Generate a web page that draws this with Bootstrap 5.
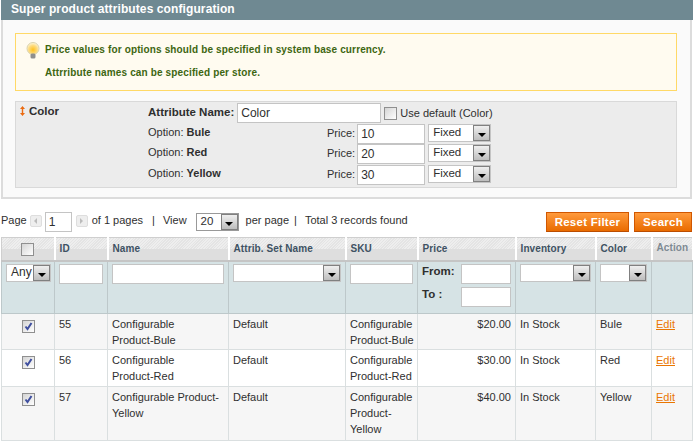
<!DOCTYPE html>
<html lang="en">
<head>
<meta charset="UTF-8">
<title>Super product attributes configuration</title>
<link rel="stylesheet" href="https://cdn.jsdelivr.net/npm/bootstrap@5.3.0/dist/css/bootstrap.min.css">
<style>
body { font-family: "Liberation Sans", Arial, sans-serif; font-size: 11px; color: #2f2f2f; background: #fff; margin: 0; width: 693px; height: 442px; overflow: hidden; line-height: 16px; }
.sec-head { height: 20px; margin-left: 1px; background: #6f8992; color: #fff; font-weight: 700; font-size: 12px; line-height: 18px; padding-left: 10px; letter-spacing: .1px; }
.sec-body { height: 179px; width: 691px; margin-left: 1px; background: #fafafa; border: 2px solid #dcdcdc; border-top: 0; padding: 13px 13px 0 12px; }
.note-box { height: 58px; background: #fffbf0; border: 1px solid #ffd967; color: #3d6611; font-weight: 700; font-size: 10px; padding: 8px 0 0 9px; margin-bottom: 10px; }
.note-box p { margin: 0 0 7px 20px; line-height: 16px; letter-spacing: .14px; }
.note-icon { float: left; margin: 0; }
.attr-box { height: 87px; background: #ececec; border: 1px solid #d9d9d9; padding: 1px 0 0 4px; }
.attr-name { width: 128px; font-weight: 700; font-size: 11.5px; line-height: 16px; }
.drag-icon { margin-right: 4px; vertical-align: -1px; }
.attr-col { width: 179px; padding-bottom: 4px; }
.attr-row { height: 20.5px; }
.attr-label { font-size: 11.5px; margin-right: 3px; padding-bottom: 2px; }
.price-label { padding-bottom: 2px; }
.field { height: 20px; border: 1px solid #c4c4c4; background: #fff; font: 12px "Liberation Sans", Arial, sans-serif; color: #2f2f2f; padding: 0 3px; outline: 0; border-radius: 0; }
.w-name { width: 144px; }
.w-price { width: 68px; margin: 0 3px 0 2px; }
.sel-box { display: flex; height: 18px; border: 1px solid #c4c4c4; background: #fff; line-height: 15px; font-size: 11.5px; padding-left: 4px; justify-content: space-between; }
.sel-arrow { width: 17px; height: 16px; background: linear-gradient(#efefef, #bdbdbd); border: 1px solid #808080; display: flex; align-items: center; justify-content: center; flex: none; }
.sel-arrow::after { content: ""; border: 4px solid transparent; border-top-color: #000; border-bottom: 0; margin-top: 4px; }
.w-fixed { width: 63px; margin-top: -2px; }
.tick { appearance: none; width: 13px; height: 13px; border: 1px solid #8f8f8f; background: linear-gradient(135deg, #d4d4d4, #fff); margin: 0; vertical-align: middle; display: inline-block; }
.tick:checked { background-image: url("data:image/svg+xml,%3Csvg xmlns='http://www.w3.org/2000/svg' viewBox='0 0 11 11'%3E%3Cpath d='M2.5 5.5l2 2.5 4-6' fill='none' stroke='%233f4f9f' stroke-width='2'/%3E%3C/svg%3E"), linear-gradient(135deg, #d4d4d4, #fff); }
.use-tick { margin: 0 3px; }
.pager-bar { height: 39px; padding: 13px 0 0 1px; font-size: 11px; line-height: 17px; }
.pg-btn { width: 12px; height: 12px; background: #eee; border: 1px solid #dedede; margin: 3px 3px 0 3px; display: inline-flex; align-items: center; justify-content: center; border-radius: 2px; }
.pg-btn + .field + .pg-btn { margin: 3px 4px 0 2px; }
.pg-prev::after { content: ""; border: 3px solid transparent; border-right-color: #bbb; border-left: 0; }
.pg-next::after { content: ""; border: 3px solid transparent; border-left-color: #bbb; border-right: 0; }
.w-page { width: 27px; height: 20px; margin: 0 2px 0 0; }
.w-view { width: 43px; margin: 1px 7px 0 9px; border-color: #999; }
.sep { margin: 0 8px 0 9px; }
.sep-near { margin-left: 5px; }
.act-btn { height: 20px; background: linear-gradient(#ff9a3c, #e96b00); border: 1px solid #d15700; border-bottom-color: #bb4d00; color: #fff; font-weight: 700; font-size: 11.5px; line-height: 17px; padding: 0; border-radius: 0; letter-spacing: .25px; }
.btn-reset { width: 83px; margin-right: 5px; }
.btn-search { width: 58px; }
.tools { margin-left: auto; margin-top: 0; margin-right: 1px; }
.grid-tbl { table-layout: fixed; width: 691px; margin: -1px 0 0 1px; border-collapse: collapse; font-size: 11px; }
.grid-tbl th, .grid-tbl td { border: 1px solid #dadfe0; padding: 0 3px; vertical-align: top; }
.head-row th { height: 23px; background: repeating-linear-gradient(135deg, #eeeeee 0 1px, #e4e4e4 1px 2px) top / 100% 50% no-repeat, #dedede; border-color: #cfcfcf; border-right: 2px solid #fff; border-bottom: 2px solid #c5c5c5; color: #3e5263; font-size: 10px; padding: 4px 0 0 4px; line-height: 14px; letter-spacing: .1px; }
.head-row th.act-col { color: #7e8a93; padding-top: 3px; }
.head-row th.tick-col { padding: 4px 0 0 0; line-height: 13px; }
.filter-row td { height: 53px; background: #d6e3e5; border-color: #bdc8ca; padding: 2px 4px 0; }
.filter-row .field { width: 100%; display: block; }
.w-any { width: 45px; font-size: 12px; padding-left: 4px; }
.range { height: 23px; font-weight: 700; font-size: 11.5px; line-height: 15px; }
.filter-row .range .field { width: 50px; margin-left: auto; }
.row-alt td { background: #f6f6f6; }
.row-plain td { background: #fff; }
.data-row td { line-height: 16px; padding: 2px 4px 0; white-space: nowrap; }
.data-row td:first-child { text-align: center; padding-top: 3px; }
.data-row a { color: #ea7601; }
.row-h1 td { height: 36px; }
.row-h2 td { height: 37px; }
.row-h3 td { height: 54px; }
</style>
</head>
<body>
<div class="sec-head">Super product attributes configuration</div>
<div class="sec-body">
    <div class="note-box">
        <svg class="note-icon" width="16" height="18" viewBox="0 0 16 18">
            <defs>
                <radialGradient id="bulbGlow" cx="50%" cy="60%" r="55%">
                    <stop offset="0" stop-color="#ffc21f"/><stop offset=".65" stop-color="#fddc82"/><stop offset="1" stop-color="#fdf3cf"/>
                </radialGradient>
            </defs>
            <circle cx="8" cy="6.5" r="6" fill="url(#bulbGlow)" stroke="#d9d2ae"/>
            <rect x="5.5" y="11.5" width="5" height="5" rx="1.5" fill="#8f8f8f"/>
        </svg>
        <p>Price values for options should be specified in system base currency.</p>
        <p>Attrribute names can be specified per store.</p>
    </div>
    <div class="attr-box d-flex">
        <div class="attr-name">
            <svg class="drag-icon" width="5" height="10" viewBox="0 0 5 10"><path d="M2.5 0L5 3H3.2v4H5L2.5 10 0 7h1.8V3H0z" fill="#eb6a10"/></svg>Color
        </div>
        <div>
            <div class="d-flex align-items-center attr-row">
                <b class="attr-label">Attribute Name:</b>
                <input class="field w-name" value="Color">
                <input type="checkbox" class="tick use-tick"> Use default (Color)
            </div>
            <div class="d-flex align-items-center attr-row">
                <span class="attr-col">Option: <b>Bule</b></span>
                <span class="price-label">Price:</span><input class="field w-price" value="10">
                <div class="sel-box w-fixed"><span>Fixed</span><span class="sel-arrow"></span></div>
            </div>
            <div class="d-flex align-items-center attr-row">
                <span class="attr-col">Option: <b>Red</b></span>
                <span class="price-label">Price:</span><input class="field w-price" value="20">
                <div class="sel-box w-fixed"><span>Fixed</span><span class="sel-arrow"></span></div>
            </div>
            <div class="d-flex align-items-center attr-row">
                <span class="attr-col">Option: <b>Yellow</b></span>
                <span class="price-label">Price:</span><input class="field w-price" value="30">
                <div class="sel-box w-fixed"><span>Fixed</span><span class="sel-arrow"></span></div>
            </div>
        </div>
    </div>
</div>
<div class="pager-bar d-flex align-items-start">
    <span>Page</span>
    <span class="pg-btn pg-prev"></span>
    <input class="field w-page" value="1">
    <span class="pg-btn pg-next"></span>
    <span>of 1 pages</span><span class="sep">|</span><span>View</span>
    <div class="sel-box w-view"><span>20</span><span class="sel-arrow"></span></div>
    <span>per page</span><span class="sep sep-near">|</span><span>Total 3 records found</span>
    <div class="tools d-flex">
        <button type="button" class="btn act-btn btn-reset">Reset Filter</button>
        <button type="button" class="btn act-btn btn-search">Search</button>
    </div>
</div>
<table class="grid-tbl">
    <colgroup>
        <col style="width:53px"><col style="width:53px"><col style="width:121px"><col style="width:117px"><col style="width:72px"><col style="width:98px"><col style="width:80px"><col style="width:56px"><col style="width:41px">
    </colgroup>
    <tr class="head-row">
        <th class="text-center tick-col"><input type="checkbox" class="tick"></th><th>ID</th><th>Name</th><th>Attrib. Set Name</th><th>SKU</th><th>Price</th><th>Inventory</th><th>Color</th><th class="act-col">Action</th>
    </tr>
    <tr class="filter-row">
        <td><div class="sel-box w-any"><span>Any</span><span class="sel-arrow"></span></div></td>
        <td><input class="field"></td>
        <td><input class="field"></td>
        <td><div class="sel-box"><span></span><span class="sel-arrow"></span></div></td>
        <td><input class="field"></td>
        <td>
            <div class="range d-flex">From:<input class="field"></div>
            <div class="range d-flex">To :<input class="field"></div>
        </td>
        <td><div class="sel-box"><span></span><span class="sel-arrow"></span></div></td>
        <td><div class="sel-box"><span></span><span class="sel-arrow"></span></div></td>
        <td></td>
    </tr>
    <tr class="data-row row-alt row-h1">
        <td><input type="checkbox" class="tick" checked></td><td>55</td><td>Configurable<br>Product-Bule</td><td>Default</td><td>Configurable<br>Product-Bule</td><td class="text-end">$20.00</td><td>In Stock</td><td>Bule</td><td><a href="#">Edit</a></td>
    </tr>
    <tr class="data-row row-plain row-h2">
        <td><input type="checkbox" class="tick" checked></td><td>56</td><td>Configurable<br>Product-Red</td><td>Default</td><td>Configurable<br>Product-Red</td><td class="text-end">$30.00</td><td>In Stock</td><td>Red</td><td><a href="#">Edit</a></td>
    </tr>
    <tr class="data-row row-alt row-h3">
        <td><input type="checkbox" class="tick" checked></td><td>57</td><td>Configurable Product-<br>Yellow</td><td>Default</td><td>Configurable<br>Product-<br>Yellow</td><td class="text-end">$40.00</td><td>In Stock</td><td>Yellow</td><td><a href="#">Edit</a></td>
    </tr>
</table>
<script src="https://cdn.jsdelivr.net/npm/bootstrap@5.3.0/dist/js/bootstrap.bundle.min.js"></script>
</body>
</html>
